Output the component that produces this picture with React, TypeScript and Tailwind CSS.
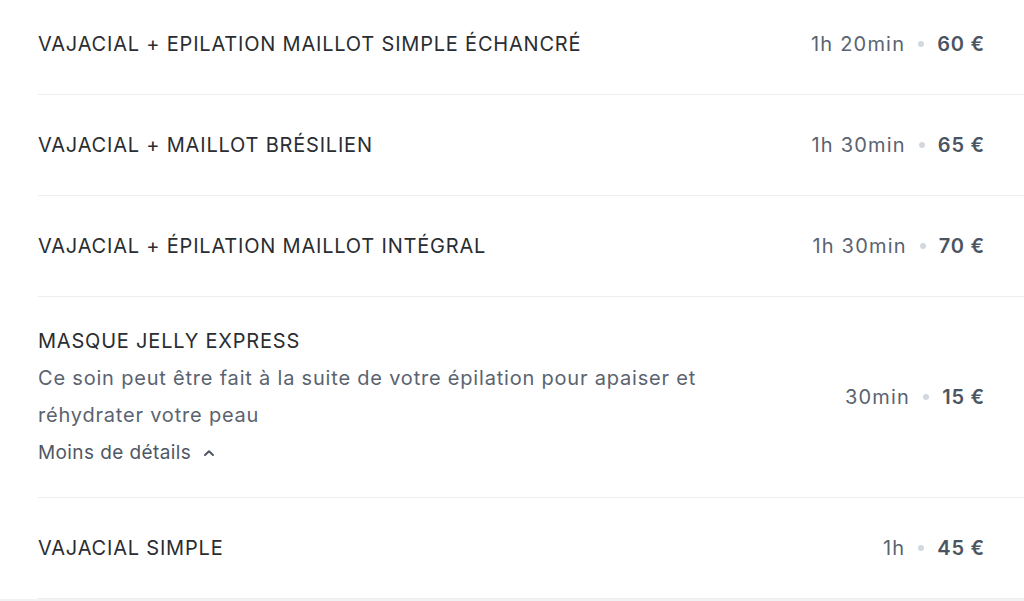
const services = [
  { name: "VAJACIAL + EPILATION MAILLOT SIMPLE ÉCHANCRÉ", duration: "1h 20min", price: "60 €" },
  { name: "VAJACIAL + MAILLOT BRÉSILIEN", duration: "1h 30min", price: "65 €" },
  { name: "VAJACIAL + ÉPILATION MAILLOT INTÉGRAL", duration: "1h 30min", price: "70 €" },
  {
    name: "MASQUE JELLY EXPRESS",
    duration: "30min",
    price: "15 €",
    details: "Ce soin peut être fait à la suite de votre épilation pour apaiser et réhydrater votre peau",
  },
  { name: "VAJACIAL SIMPLE", duration: "1h", price: "45 €" },
];

function ChevronUp() {
  return (
    <svg width="12" height="12" viewBox="0 0 12 12" fill="none" className="ml-[12px] mt-[1px]">
      <path d="M2 8L6 4.2L10 8" stroke="currentColor" strokeWidth="2" strokeLinecap="round" strokeLinejoin="round" />
    </svg>
  );
}

export default function App() {
  return (
    <div className="bg-white min-h-[601px] font-['Inter',sans-serif] text-[20px] leading-[37px] tracking-[0.8px]">
      <div className="-mt-[6px]">
        {services.map((s) => (
          <div
            key={s.name}
            className={`ml-[38px] pr-[39px] flex items-center justify-between border-b border-[#eceef0] ${
              s.details ? "py-[26px]" : "py-[31.5px]"
            }`}
          >
            <div className="max-w-[670px]">
              <div className="text-[#2a2d31]">{s.name}</div>
              {s.details && (
                <>
                  <p className="text-[#5a6370]">{s.details}</p>
                  <button className="flex items-center text-[#4f5864] text-[19px] tracking-[0.4px]">
                    Moins de détails
                    <ChevronUp />
                  </button>
                </>
              )}
            </div>
            <div className="flex items-center shrink-0">
              <span className="text-[#5a6370] tracking-[1.2px]">{s.duration}</span>
              <span className="mx-[13px] w-[6px] h-[6px] rounded-full bg-[#d2d8de]" />
              <span className="text-[#4b5561] font-semibold">{s.price}</span>
            </div>
          </div>
        ))}
      </div>
      <div className="h-[3px] bg-[#f1f2f4]" />
    </div>
  );
}
